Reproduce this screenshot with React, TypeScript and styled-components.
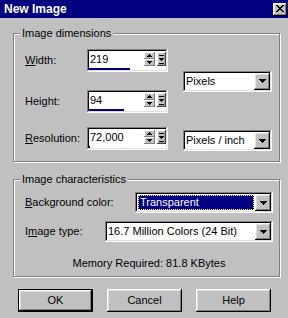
import React from "react";
import styled, { createGlobalStyle } from "styled-components";

const Global = createGlobalStyle`
  html, body { margin: 0; padding: 0; background: #c0c0c0; }
  body {
    font-family: "Liberation Sans", Arial, sans-serif;
    font-size: 11px;
    line-height: 13px;
    color: #000;
  }
  #root { width: 288px; height: 318px; overflow: hidden; }
  * { box-sizing: border-box; }
`;

const raised = `box-shadow: inset -1px -1px #000, inset 1px 1px #fff, inset -2px -2px #808080, inset 2px 2px #dfdfdf;`;
const sunken = `box-shadow: inset -1px -1px #fff, inset 1px 1px #808080, inset -2px -2px #dfdfdf, inset 2px 2px #000;`;

const Window = styled.div`
  width: 288px;
  height: 318px;
  background: #c0c0c0;
  display: flex;
  flex-direction: column;
`;

const TitleBar = styled.div`
  height: 18px;
  background: #000080;
  display: flex;
  align-items: center;
  justify-content: space-between;
  padding: 0 1px 0 4px;
`;

const Title = styled.span`
  color: #fff;
  font-weight: bold;
  font-size: 12px;
  line-height: 14px;
`;

const CloseButton = styled.div`
  width: 14px;
  height: 13px;
  background: #c0c0c0;
  ${raised}
  display: flex;
  align-items: center;
  justify-content: center;
  padding-bottom: 1px;
`;

const Body = styled.div`
  display: flex;
  flex-direction: column;
  padding: 15px 8px 0 13px;
`;

const Group = styled.div<{ $mt?: number }>`
  position: relative;
  border: 1px solid #808080;
  box-shadow: inset 1px 1px #fff, 1px 1px #fff;
  margin-top: ${(p) => p.$mt ?? 0}px;
`;

const Legend = styled.span`
  position: absolute;
  top: -7px;
  left: 6px;
  padding: 0 2px;
  background: #c0c0c0;
`;

const DimGrid = styled.div`
  display: grid;
  grid-template-columns: 62px 81px 15px 89px;
  grid-template-rows: 23px 18px 23px 14px 23px;
  padding: 15px 6px 11px 11px;
`;

const Label = styled.span<{ $row?: number }>`
  grid-column: 1;
  grid-row: ${(p) => p.$row ?? "auto"};
  align-self: center;
  white-space: nowrap;
  u { text-decoration: underline; text-underline-offset: 1px; }
`;

const SpinBox = styled.div<{ $row: number }>`
  grid-column: 2;
  grid-row: ${(p) => p.$row};
  display: flex;
  background: #fff;
  ${sunken}
  padding: 2px;
`;

const SpinField = styled.div`
  flex: 1;
  display: flex;
  flex-direction: column;
  padding-top: 2px;
`;

const SpinText = styled.span`
  padding-left: 1px;
`;

const Fill = styled.div<{ $w: number }>`
  margin-top: auto;
  height: 2px;
  width: ${(p) => p.$w}px;
  background: #000080;
`;

const SpinArrows = styled.div`
  display: flex;
  flex-direction: column;
  margin-top: 1px;
`;

const SmallButton = styled.div<{ $w: number; $h: number }>`
  width: ${(p) => p.$w}px;
  height: ${(p) => p.$h}px;
  background: #c0c0c0;
  box-shadow: inset -1px -1px #808080, inset 1px 1px #fff;
  display: flex;
  align-items: center;
  justify-content: center;
`;

const ExtraButton = styled(SmallButton)`
  margin: 1px 0 0 2px;
  box-shadow: inset -1px -1px #404040, inset 1px 1px #fff, inset -2px -2px #a0a0a0;
`;

const Select = styled.div<{ $row?: string; $mt?: number; $align?: string }>`
  grid-column: 4;
  grid-row: ${(p) => p.$row ?? "auto"};
  align-self: ${(p) => p.$align ?? "center"};
  margin-top: ${(p) => p.$mt ?? 0}px;
  height: 21px;
  flex: 1;
  background: #fff;
  ${sunken}
  padding: 2px;
  display: flex;
`;

const SelectValue = styled.div<{ $selected?: boolean }>`
  flex: 1;
  display: flex;
  align-items: center;
  padding-left: ${(p) => (p.$selected ? 2 : 1)}px;
  margin: ${(p) => (p.$selected ? "1px" : "0")};
  background: ${(p) => (p.$selected ? "#000080" : "transparent")};
  color: ${(p) => (p.$selected ? "#fff" : "#000")};
  outline: ${(p) => (p.$selected ? "1px dotted #ffffc0" : "none")};
  outline-offset: -1px;
  white-space: nowrap;
`;

const ArrowButton = styled.div`
  width: 16px;
  background: #c0c0c0;
  ${raised}
  display: flex;
  align-items: center;
  justify-content: center;
`;

const CharPanel = styled.div`
  display: flex;
  flex-direction: column;
  padding: 12px 6px 6px 11px;
`;

const FieldRow = styled.div<{ $mt?: number }>`
  display: flex;
  align-items: center;
  margin-top: ${(p) => p.$mt ?? 0}px;
`;

const RowLabel = styled.span<{ $w: number }>`
  width: ${(p) => p.$w}px;
  flex: none;
  white-space: nowrap;
`;

const Memory = styled.div`
  margin-top: 15px;
  text-align: center;
`;

const ButtonRow = styled.div`
  display: flex;
  gap: 14px;
  margin-top: 12px;
  padding-left: 5px;
`;

const Button = styled.div<{ $default?: boolean }>`
  width: 75px;
  height: 23px;
  background: #c0c0c0;
  display: flex;
  align-items: center;
  justify-content: center;
  ${(p) => (p.$default ? `border: 1px solid #000; ${raised}` : raised)}
`;

const Tri = ({ dir, size }: { dir: "up" | "down"; size: number }) => {
  const rows = Math.ceil(size / 2);
  const rects = [];
  for (let i = 0; i < rows; i++) {
    const w = dir === "down" ? size - i * 2 : 1 + i * 2;
    rects.push(<rect key={i} x={(size - w) / 2} y={i} width={w} height={1} fill="#000" />);
  }
  return (
    <svg width={size} height={rows} shapeRendering="crispEdges" style={{ display: "block" }}>
      {rects}
    </svg>
  );
};

const BarArrow = () => (
  <svg width={5} height={9} shapeRendering="crispEdges" style={{ display: "block" }}>
    <rect x={0} y={0} width={5} height={1} fill="#000" />
    <rect x={0} y={3} width={5} height={1} fill="#000" />
    <rect x={1} y={4} width={3} height={1} fill="#000" />
    <rect x={2} y={5} width={1} height={1} fill="#000" />
    <rect x={0} y={8} width={5} height={1} fill="#000" />
  </svg>
);

const CloseX = () => (
  <svg width={8} height={7} shapeRendering="crispEdges" style={{ display: "block" }}>
    {[0, 1, 2, 3, 4, 5, 6].map((i) => (
      <g key={i}>
        <rect x={i} y={i} width={2} height={1} fill="#000" />
        <rect x={6 - i} y={i} width={2} height={1} fill="#000" />
      </g>
    ))}
  </svg>
);

const Spin = ({ row, value, fill }: { row: number; value: string; fill: number }) => (
  <SpinBox $row={row}>
    <SpinField>
      <SpinText>{value}</SpinText>
      <Fill $w={fill} />
    </SpinField>
    <SpinArrows>
      <SmallButton $w={11} $h={7}>
        <Tri dir="up" size={5} />
      </SmallButton>
      <SmallButton $w={11} $h={7}>
        <Tri dir="down" size={5} />
      </SmallButton>
    </SpinArrows>
    <ExtraButton $w={9} $h={14}>
      <BarArrow />
    </ExtraButton>
  </SpinBox>
);

const Arrow = () => (
  <ArrowButton>
    <Tri dir="down" size={7} />
  </ArrowButton>
);

export default function App() {
  return (
    <Window>
      <Global />
      <TitleBar>
        <Title>New Image</Title>
        <CloseButton>
          <CloseX />
        </CloseButton>
      </TitleBar>
      <Body>
        <Group>
          <Legend>Image dimensions</Legend>
          <DimGrid>
            <Label $row={1}>
              <u>W</u>idth:
            </Label>
            <Spin row={1} value="219" fill={41} />
            <Select $row="1 / 4">
              <SelectValue>Pixels</SelectValue>
              <Arrow />
            </Select>
            <Label $row={3}>
              Hei<u>g</u>ht:
            </Label>
            <Spin row={3} value="94" fill={35} />
            <Label $row={5}>
              <u>R</u>esolution:
            </Label>
            <Spin row={5} value="72,000" fill={1} />
            <Select $row="5" $align="start" $mt={3}>
              <SelectValue>Pixels / inch</SelectValue>
              <Arrow />
            </Select>
          </DimGrid>
        </Group>
        <Group $mt={17}>
          <Legend>Image characteristics</Legend>
          <CharPanel>
            <FieldRow>
              <RowLabel $w={110}>
                <u>B</u>ackground color:
              </RowLabel>
              <Select>
                <SelectValue $selected>Transparent</SelectValue>
                <Arrow />
              </Select>
            </FieldRow>
            <FieldRow $mt={8}>
              <RowLabel $w={80}>
                I<u>m</u>age type:
              </RowLabel>
              <Select>
                <SelectValue>16.7 Million Colors (24 Bit)</SelectValue>
                <Arrow />
              </Select>
            </FieldRow>
            <Memory>Memory Required: 81.8 KBytes</Memory>
          </CharPanel>
        </Group>
        <ButtonRow>
          <Button $default>OK</Button>
          <Button>Cancel</Button>
          <Button>Help</Button>
        </ButtonRow>
      </Body>
    </Window>
  );
}
